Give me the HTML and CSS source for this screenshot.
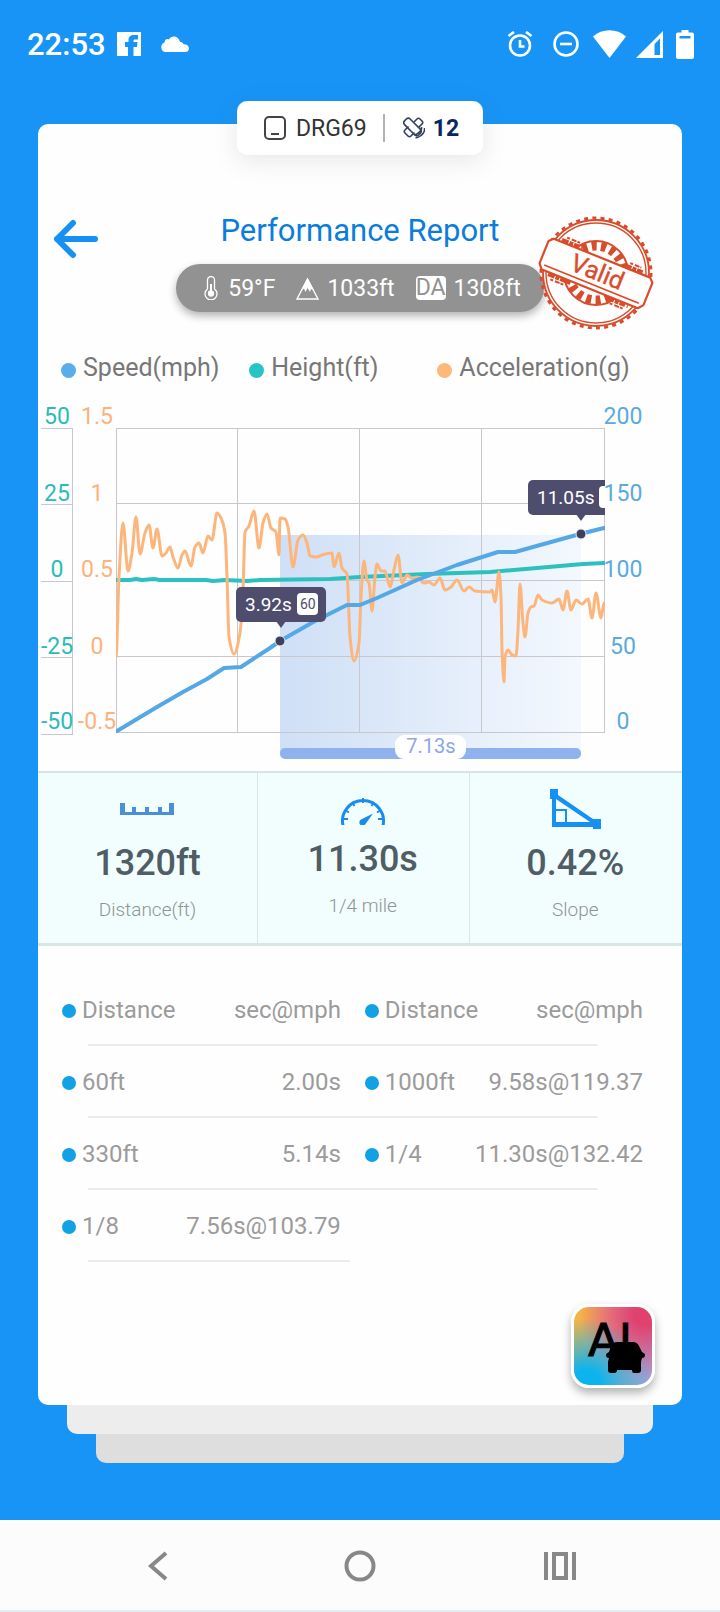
FILE: index.html
```
<!DOCTYPE html>
<html lang="en">
<head>
    <meta charset="UTF-8">
    <meta name="viewport" content="width=device-width, initial-scale=1.0">
    <title>Performance Report</title>
    <link rel="stylesheet" href="styles.css">
</head>
<body>
    <!-- Status bar -->
    <div class="status-bar">
        <span class="clock">22:53</span>
        <svg class="facebook" width="24" height="24" viewBox="0 0 24 24"><path fill="#fff" fill-rule="evenodd" d="M0 0h24v24H0zM11 24h5.500v-9h3.500l.5-5h-4V9c0-1 .5-1.500 1.500-1.500h3V3h-4.500c-3 0-5 2-5 5v2H8v5h3z"/></svg>
        <svg width="29" height="16" viewBox="0 0 29 16"><path fill="#fff" d="M5 16a5 5 0 0 1-.5-9.500C5 3 7 2.500 9 3.500c2-4.500 9.500-4.500 11 2.500 1.500 0 3 .5 3.500 2.200 3 0 5.500 1.500 5.500 4.300 0 2.500-2 3.500-4 3.500z"/></svg>
        <div class="status-icons">
            <svg width="26" height="26" viewBox="0 0 26 26" fill="none" stroke="#fff" stroke-width="2.600"><circle cx="13" cy="14.500" r="10"/><path d="M13 9v6.500h4.500M1.500 5 7 1M24.500 5 19 1"/></svg>
            <svg class="dnd" width="26" height="26" viewBox="0 0 26 26" fill="none" stroke="#fff" stroke-width="2.600"><circle cx="13" cy="13" r="11.500"/><path d="M7 13h12"/></svg>
            <svg class="wifi" width="33" height="28" viewBox="0 0 33 28"><path fill="#fff" d="M0 6.500C9-2 24-2 33 6.500L16.500 28z"/></svg>
            <svg class="signal" width="27" height="27" viewBox="0 0 27 27"><path fill="#fff" fill-rule="evenodd" d="M27 0v27H0zM24 7.500l-5.500 5.500v11H24z"/></svg>
            <svg class="battery" width="18" height="29" viewBox="0 0 18 29"><path fill="#fff" fill-rule="evenodd" d="M5.500 0h7v2.500H16a2 2 0 0 1 2 2V27a2 2 0 0 1-2 2H2a2 2 0 0 1-2-2V4.500a2 2 0 0 1 2-2h3.500zM3.500 6v2.500h11V6z"/></svg>
        </div>
    </div>

    <main class="page">
        <!-- Car name and satellites -->
        <div class="tab">
            <svg width="22" height="24" viewBox="0 0 22 24" fill="none" stroke="#444" stroke-width="2"><rect x="1" y="1" width="20" height="22" rx="4"/><path d="M7 18h8"/></svg>
            <span class="car-name">DRG69</span>
            <span class="tab-line"></span>
            <svg width="22" height="22" viewBox="0 0 22 22" fill="none" stroke="#33415f" stroke-width="1.600">
                <rect x="-4" y="-10" width="8" height="20" rx="3" transform="translate(9.500 10) rotate(-45)"/>
                <path d="M11 5l3-3q1.500-1.500 3 0l2 2q1.500 1.500 0 3l-3.500 3.500M5.500 9.500 2 13q-1.500 1.500 0 3l3 3q1.500 1.500 3 0l3.500-3.500"/>
                <path d="M18.500 10q.5 3.500-3 6-2 1.500-4.500 2M21.500 11q.5 4.500-3.500 7.500-2.500 2-5.500 2.500"/>
            </svg>
            <span class="sat-count">12</span>
        </div>

        <div class="card">
            <div class="header">
                <button class="back" type="button" aria-label="Back">
                    <svg width="46" height="40" viewBox="0 0 46 40" fill="none" stroke="#1790f3" stroke-width="6" stroke-linecap="round" stroke-linejoin="round"><path d="M42 20H4M20 4 4 20l16 16"/></svg>
                </button>
                <div class="heading">
                    <h1>Performance Report</h1>
                    <div class="weather">
                        <span class="weather-item">
                            <svg width="16" height="24" viewBox="0 0 16 24" fill="none" stroke="#fff" stroke-width="1.300"><path d="M3.500 13V4a3.500 3.500 0 0 1 7 0v9a6 6 0 1 1-7 0z"/><path stroke-width="2" d="M7 8v9"/><circle cx="7" cy="17.500" r="2.500" fill="#fff"/></svg>
                            59°F
                        </span>
                        <span class="weather-item">
                            <svg width="23" height="23" viewBox="0 0 23 23"><path fill="none" stroke="#fff" stroke-width="1.400" d="M11.500 2 1 22h21z"/><path fill="#fff" d="M11.500 1 5 13.500l3-2 1.500 3.500 2-4 2.500 4 1-3 3 1.500z"/></svg>
                            1033ft
                        </span>
                        <span class="weather-item"><span class="da">DA</span>1308ft</span>
                    </div>
                </div>
                <svg class="stamp" width="120" height="120" viewBox="0 0 120 120" fill="none" stroke="#d94c2b">
                    <circle cx="60" cy="60" r="55" stroke-width="3" stroke-dasharray="4 4.228"/>
                    <circle cx="60" cy="60" r="53" stroke-width="1.800"/>
                    <circle cx="60" cy="60" r="50" stroke-width="1.400"/>
                    <circle cx="60" cy="60" r="32" stroke-width="2"/>
                    <circle cx="60" cy="60" r="27" stroke-width="9" stroke-dasharray="5 4.420"/>
                    <g transform="rotate(22 60 60)">
                        <path stroke-width="4" stroke-dasharray="7 1 4 1 6 2" d="M16 42h22M84 42h20M16 79h24M80 79h22"/>
                        <path stroke-width="2" stroke-dasharray="3 2 5 1" d="M20 38h14M88 38h12M20 83h16M84 83h14"/>
                        <path fill="#fffefd" stroke-width="2.200" stroke-linejoin="round" d="M8 44h104l4 4v24l-4 5H8l-4-5V48z"/>
                        <path stroke-width="1.800" d="M9 72h102"/>
                        <text class="stamp-text" x="61" y="67" text-anchor="middle">Valid</text>
                    </g>
                </svg>
            </div>

            <div class="legend">
                <span class="legend-item"><i class="dot dot-speed"></i>Speed(mph)</span>
                <span class="legend-item"><i class="dot dot-height"></i>Height(ft)</span>
                <span class="legend-item"><i class="dot dot-accel"></i>Acceleration(g)</span>
            </div>

            <svg class="chart" viewBox="0 0 644 375">
                <defs>
                    <linearGradient id="shade">
                        <stop offset="0" stop-color="#cfdff6"/>
                        <stop offset="1" stop-color="#f3f8fe"/>
                    </linearGradient>
                </defs>
                <!-- 60-130 interval -->
                <rect x="242" y="139" width="301" height="218" fill="url(#shade)"/>
                <rect x="242" y="352" width="301" height="11" rx="5" fill="#8fb2ee"/>
                <rect x="357" y="339" width="71" height="24" rx="9" fill="#fff"/>
                <text class="interval-text" x="393" y="357">7.13s</text>

                <path class="grid" d="M3 32.500h31M3 108.500h31M3 185.500h31M3 261.500h31M3 338.500h31M34.500 32v307"/>
                <g class="axis axis-height">
                    <text x="19" y="28">50</text>
                    <text x="19" y="105">25</text>
                    <text x="19" y="181">0</text>
                    <text x="19" y="258">-25</text>
                    <text x="19" y="333">-50</text>
                </g>
                <svg x="78" y="31" width="489" height="306" viewBox="0 -1 489 306">
                    <path class="grid" d="M0 .5h489M0 75.500h489M0 152.500h489M0 228.500h489M0 304.500h489M.5 0v305M121.500 0v305M243.500 0v305M365.500 0v305M488.500 0v305"/>
                    <path class="line line-height" id="heightLine"/>
                    <path class="line line-accel" id="accelLine"/>
                    <path class="line line-speed" id="speedLine"/>
                    <g class="marker">
                        <circle cx="164" cy="213" r="5"/>
                        <rect x="120" y="159" width="90" height="35" rx="5"/>
                        <path d="M160 193h10l-5 7z"/>
                        <rect class="marker-badge" x="181" y="165" width="21" height="22" rx="4"/>
                        <text class="marker-text" x="129" y="183">3.92s</text>
                        <text class="marker-speed" x="184" y="181">60</text>
                    </g>
                    <g class="marker">
                        <circle cx="465" cy="106" r="5"/>
                        <rect x="412" y="52" width="100" height="35" rx="5"/>
                        <path d="M460 86h10l-5 7z"/>
                        <rect class="marker-badge" x="483" y="58" width="28" height="22" rx="4"/>
                        <text class="marker-text" x="421" y="76">11.05s</text>
                    </g>
                </svg>
                <g class="axis axis-accel">
                    <text x="59" y="28">1.5</text>
                    <text x="59" y="105">1</text>
                    <text x="59" y="181">0.5</text>
                    <text x="59" y="258">0</text>
                    <text x="59" y="333">-0.5</text>
                </g>
                <g class="axis axis-speed">
                    <text x="585" y="28">200</text>
                    <text x="585" y="105">150</text>
                    <text x="585" y="181">100</text>
                    <text x="585" y="258">50</text>
                    <text x="585" y="333">0</text>
                </g>
            </svg>

            <div class="stats">
                <div class="stat">
                    <svg width="54" height="40" viewBox="0 0 54 40"><path fill="#4b8fd6" d="M0 14h5v9h7v-5h4v5h9v-5h4v5h9v-5h4v5h7v-9h5v12H0z"/></svg>
                    <strong>1320ft</strong>
                    <span>Distance(ft)</span>
                </div>
                <div class="stat">
                    <svg width="46" height="36" viewBox="0 0 46 36" fill="none" stroke="#1a8cf0">
                        <path stroke-width="3" d="M3 36.500A20.500 20.500 0 1 1 43 36.500"/>
                        <path stroke-width="2" d="M3 30h5M43 30h-5M5 21l4 2.500M41 21l-4 2.500M12 13l2.500 4M34 13l-2.500 4M23 9v5"/>
                        <path fill="#1a8cf0" stroke="none" d="M33 24.500 25.500 35a3.300 3.300 0 1 1-4.500-4.500z"/>
                    </svg>
                    <strong>11.30s</strong>
                    <span>1/4 mile</span>
                </div>
                <div class="stat">
                    <svg width="51" height="40" viewBox="0 0 51 40"><path fill="#1790f3" fill-rule="evenodd" d="M0 0h8v6l35 24h8v10h-8v-2H2V10H0zM6 10v23h34z"/><path fill="none" stroke="#1790f3" stroke-width="2" d="M5 21h11v14"/></svg>
                    <strong>0.42%</strong>
                    <span>Slope</span>
                </div>
            </div>

            <table class="results">
                <tr>
                    <th class="name"><i class="dot"></i>Distance</th>
                    <th class="value">sec@mph</th>
                    <th class="name"><i class="dot"></i>Distance</th>
                    <th class="value">sec@mph</th>
                </tr>
                <tr>
                    <td class="name"><i class="dot"></i>60ft</td>
                    <td class="value">2.00s</td>
                    <td class="name"><i class="dot"></i>1000ft</td>
                    <td class="value">9.58s@119.37</td>
                </tr>
                <tr>
                    <td class="name"><i class="dot"></i>330ft</td>
                    <td class="value">5.14s</td>
                    <td class="name"><i class="dot"></i>1/4</td>
                    <td class="value">11.30s@132.42</td>
                </tr>
                <tr class="half">
                    <td class="name"><i class="dot"></i>1/8</td>
                    <td class="value">7.56s@103.79</td>
                    <td></td>
                    <td></td>
                </tr>
            </table>

            <button class="ai-button" type="button" aria-label="AI">
                <svg width="78" height="78" viewBox="0 0 78 78">
                    <text class="ai-text" x="14" y="49">AI</text>
                    <path d="M43 35h16q4 0 6 4l3 6c1 1 3 1 3 3s-1 3-3 3l-1 4v8q0 3-3 3h-4q-2 0-2-3H43q0 3-3 3h-3q-3 0-3-3v-8l1-4c-2 0-3-1-3-3s2-2 3-3l2-6q2-4 6-4z"/>
                </svg>
            </button>
        </div>
        <div class="layer layer-one"></div>
        <div class="layer layer-two"></div>
    </main>

    <nav class="nav-bar">
        <button type="button" aria-label="Back"><svg width="32" height="32" viewBox="0 0 32 32"><path d="M22 3 7 16l15 13"/></svg></button>
        <button type="button" aria-label="Home"><svg width="32" height="32" viewBox="0 0 32 32"><circle cx="16" cy="16" r="13.500"/></svg></button>
        <button type="button" aria-label="Recent apps"><svg width="32" height="32" viewBox="0 0 32 32"><path d="M2 2v28M30 2v28M10 4h12v24H10z"/></svg></button>
    </nav>

    <script src="chart.js"></script>
</body>
</html>
```
FILE: styles.css
```
* {
    box-sizing: border-box;
}

body {
    margin: 0;
    min-height: 100vh;
    display: flex;
    flex-direction: column;
    background-color: #1794f6;
    font-family: Roboto, sans-serif;
    color: #777;
}

button {
    padding: 0;
    border: none;
    background: none;
    cursor: pointer;
}

svg {
    display: block;
    flex-shrink: 0;
}

/* Status bar */
.status-bar {
    height: 88px;
    padding: 0 26px 0 27px;
    display: flex;
    align-items: center;
    color: #fff;
}

.clock {
    font-size: 31px;
    font-weight: 500;
}

.facebook {
    margin: 0 19px 0 11px;
}

.status-icons {
    margin-left: auto;
    display: flex;
    align-items: center;
}

.dnd {
    margin-left: 20px;
}

.wifi {
    margin-left: 14px;
}

.signal {
    margin-left: 10px;
}

.battery {
    margin-left: 13px;
}

.page {
    flex: 1;
    display: flex;
    flex-direction: column;
    padding: 13px 38px 57px;
}

/* Tab that sits over the top edge of the card */
.tab {
    z-index: 1;
    align-self: center;
    display: flex;
    align-items: center;
    height: 54px;
    margin-bottom: -31px;
    padding: 0 24px 0 27px;
    border-radius: 10px;
    background-color: #fff;
    box-shadow: 0 6px 24px rgba(90, 90, 90, 0.14);
}

.car-name {
    margin: 0 16px 0 10px;
    font-size: 23px;
    color: #333;
}

.tab-line {
    width: 2px;
    height: 28px;
    margin-right: 18px;
    background-color: #b5b5b5;
}

.sat-count {
    margin-left: 8px;
    font-size: 23px;
    font-weight: 700;
    color: #062860;
}

.card {
    flex: 1;
    display: flex;
    flex-direction: column;
    border-radius: 10px;
    background-color: #fefefe;
}

.layer {
    height: 29px;
    border-radius: 0 0 10px 10px;
}

.layer-one {
    margin: 0 29px;
    background-color: #ededed;
}

.layer-two {
    margin: 0 58px;
    background-color: #dedede;
}

/* Header */
.header {
    display: grid;
    grid-template-columns: 1fr auto 1fr;
    align-items: start;
    margin-top: 89px;
}

.back {
    justify-self: start;
    margin: 6px 0 0 15px;
}

.heading {
    display: flex;
    flex-direction: column;
    align-items: center;
    gap: 15px;
}

h1 {
    margin: 0;
    font-size: 31px;
    line-height: 36px;
    font-weight: 400;
    color: #0a7ddc;
}

.weather {
    display: flex;
    align-items: center;
    gap: 21px;
    height: 48px;
    padding: 0 23px 0 28px;
    border-radius: 24px;
    background-color: #929292;
    box-shadow: 0 4px 8px rgba(0, 0, 0, 0.3);
    font-size: 23px;
    color: #fff;
}

.weather-item {
    display: flex;
    align-items: center;
    gap: 8px;
}

.da {
    border-radius: 4px;
    background-color: #fff;
    line-height: 24px;
    color: #929292;
}

.stamp {
    margin-left: -8px;
}

.stamp-text {
    font-size: 25px;
    fill: #d94c2b;
    stroke-width: 0.4px;
}

/* Legend */
.legend {
    display: grid;
    grid-template-columns: 20fr 20fr 26fr;
    margin: 20px 0 13px;
    padding-left: 23px;
    font-size: 25px;
    line-height: 30px;
}

.legend-item {
    display: flex;
    align-items: center;
    gap: 7px;
}

.dot {
    width: 15px;
    height: 15px;
    border-radius: 50%;
    background-color: #12a1e5;
}

.legend .dot {
    margin-top: 4px;
}

.dot-speed {
    background-color: #5aaee8;
}

.dot-height {
    background-color: #27c4c4;
}

.dot-accel {
    background-color: #fdb87c;
}

/* Chart */
.chart {
    width: 100%;
}

.grid {
    fill: none;
    stroke: #c8c8cc;
    stroke-width: 1px;
}

.axis {
    font-size: 23px;
    text-anchor: middle;
}

.axis-height {
    fill: #2bbcb8;
}

.axis-accel {
    fill: #fbb27c;
}

.axis-speed {
    fill: #5aaae0;
}

.line {
    fill: none;
    stroke-linecap: round;
    stroke-linejoin: round;
}

.line-speed {
    stroke: #55a8e6;
    stroke-width: 4px;
}

.line-height {
    stroke: #2cc0be;
    stroke-width: 4px;
}

.line-accel {
    stroke: #fcb67c;
    stroke-width: 3px;
}

.marker {
    fill: #4f4d6e;
}

.marker circle {
    fill: #3f3e5c;
    stroke: #e6eefa;
    stroke-width: 1px;
}

.marker .marker-badge,
.marker .marker-text {
    fill: #fff;
}

.marker-text {
    font-size: 19px;
}

.marker-speed {
    font-size: 14px;
}

.interval-text {
    font-size: 20px;
    text-anchor: middle;
    fill: #8ca6e6;
}

/* Stats */
.stats {
    display: grid;
    grid-template-columns: 34fr 33fr 33fr;
    border-top: 2px solid #d6e5e6;
    border-bottom: 3px solid #d9e6e6;
    background-color: #f2fdfd;
}

.stat {
    display: flex;
    flex-direction: column;
    align-items: center;
    padding: 16px 0 21px;
}

.stat + .stat {
    padding-right: 2px;
    border-left: 1px solid #d6e9e9;
}

.stat strong {
    margin: 13px 0 14px;
    font-size: 36px;
    line-height: 42px;
    font-weight: 500;
    color: #4f5d66;
}

.stat span {
    font-size: 19px;
    line-height: 24px;
    font-weight: 300;
    color: #8f9494;
}

/* Results */
.results {
    width: calc(100% - 63px);
    margin: 28px 39px 0 24px;
    border-collapse: collapse;
    table-layout: fixed;
    font-size: 24px;
    color: #9b9b9b;
}

.results tr {
    height: 72px;
    background: linear-gradient(#ebebeb, #ebebeb) no-repeat 26px 100% / calc(100% - 71px) 2px;
}

.results .half {
    background-size: 262px 2px;
}

.results th,
.results td {
    padding: 0;
    font-weight: 400;
    white-space: nowrap;
}

.results .name {
    width: 20%;
    text-align: left;
}

.results .value {
    width: 28%;
    text-align: right;
}

.results .value + .name {
    width: 23%;
    padding-left: 24px;
}

.results .name + .value:last-child {
    width: 29%;
}

.name .dot {
    display: inline-block;
    width: 14px;
    height: 14px;
    margin-right: 6px;
}

/* Floating AI button */
.ai-button {
    align-self: flex-end;
    margin: auto 27px 17px 0;
    border: 3px solid #fff;
    border-radius: 18px;
    background:
        radial-gradient(circle at 15% 100%, #0cb4ee 15%, rgba(12, 180, 238, 0) 65%),
        radial-gradient(circle at 90% 10%, #e0416f 10%, rgba(224, 65, 111, 0) 65%),
        linear-gradient(100deg, #f6b345 10%, #e9a48a 45%, #a6a0d4 90%);
    box-shadow: 0 5px 10px rgba(0, 0, 0, 0.3);
}

.ai-text {
    font-family: "DejaVu Sans", sans-serif;
    font-size: 45px;
    fill: #000;
    stroke: #000;
    stroke-width: 1px;
}

/* Navigation bar */
.nav-bar {
    display: flex;
    height: 92px;
    padding: 2px 60px 0;
    border-bottom: 2px solid #e2eff8;
    background-color: #fcfcfc;
}

.nav-bar button {
    flex: 1;
    display: flex;
    align-items: center;
    justify-content: center;
}

.nav-bar svg {
    fill: none;
    stroke: #888;
    stroke-width: 4px;
}
```
FILE: chart.js
```
// Points are [x, y] inside the 488 x 305 plot area
const speed = [
    [1, 303], [41, 279], [67, 264], [91, 251], [108, 240], [125, 239], [154, 220], [164, 213],
    [199, 193], [231, 177], [244, 177], [261, 170], [301, 152], [341, 137], [382, 124],
    [399, 124], [464, 106], [488, 100]
];

const height = [
    [0, 152], [14, 152], [20, 151], [26, 152], [38, 151], [44, 152], [90, 152], [97, 153],
    [109, 152], [131, 153], [144, 152], [214, 151], [244, 149], [311, 146], [374, 144],
    [421, 140], [467, 136], [488, 135]
];

const accel = [
    [0, 229], [3, 149], [7, 95], [12, 143], [16, 125], [20, 89], [24, 126], [29, 105], [33, 97],
    [37, 120], [41, 101], [46, 128], [50, 125], [54, 119], [57, 129], [62, 140], [66, 127],
    [69, 123], [75, 138], [79, 119], [83, 115], [87, 125], [92, 108], [96, 112], [101, 85],
    [105, 90], [109, 105], [111, 149], [113, 209], [118, 226], [124, 205], [127, 162], [129, 104],
    [133, 98], [138, 83], [143, 120], [147, 95], [151, 86], [155, 100], [160, 104], [163, 127],
    [164, 90], [169, 91], [172, 99], [177, 139], [182, 112], [187, 107], [191, 115], [194, 128],
    [201, 129], [206, 127], [216, 125], [218, 139], [223, 125], [226, 140], [231, 146],
    [234, 209], [238, 233], [243, 215], [245, 169], [248, 133], [251, 152], [253, 155],
    [256, 183], [259, 149], [261, 136], [265, 143], [269, 143], [274, 159], [278, 142],
    [282, 127], [286, 155], [291, 147], [297, 151], [301, 149], [308, 155], [313, 154],
    [318, 157], [324, 150], [329, 162], [335, 159], [341, 152], [348, 163], [353, 159],
    [359, 163], [374, 164], [376, 162], [379, 174], [383, 144], [385, 169], [386, 222],
    [388, 254], [389, 229], [392, 222], [396, 227], [400, 228], [402, 202], [404, 156],
    [407, 195], [409, 209], [412, 185], [415, 179], [418, 178], [422, 167], [426, 172],
    [436, 175], [443, 171], [447, 182], [451, 163], [455, 182], [460, 172], [466, 176],
    [472, 171], [476, 190], [480, 165], [485, 190], [488, 175]
];

function straightPath(points) {
    return 'M' + points.map(function (p) { return p.join(' '); }).join('L');
}

// Smooth line that stays flat at every peak and dip
function smoothPath(points) {
    const slopes = points.map(function (p, i) {
        if (i === 0 || i === points.length - 1) return 0;
        const before = (p[1] - points[i - 1][1]) / (p[0] - points[i - 1][0]);
        const after = (points[i + 1][1] - p[1]) / (points[i + 1][0] - p[0]);
        return before * after <= 0 ? 0 : 2 * before * after / (before + after);
    });

    let d = 'M' + points[0].join(' ');
    for (let i = 1; i < points.length; i++) {
        const a = points[i - 1];
        const b = points[i];
        const step = (b[0] - a[0]) / 3;
        d += 'C' + [a[0] + step, a[1] + slopes[i - 1] * step, b[0] - step, b[1] - slopes[i] * step, b[0], b[1]].join(' ');
    }
    return d;
}

document.getElementById('speedLine').setAttribute('d', straightPath(speed));
document.getElementById('heightLine').setAttribute('d', straightPath(height));
document.getElementById('accelLine').setAttribute('d', smoothPath(accel));
```
